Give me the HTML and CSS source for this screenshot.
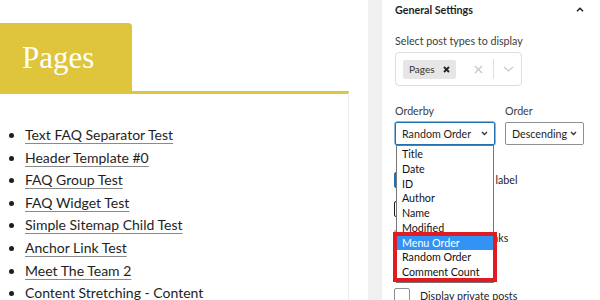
FILE: index.html
```html
<!DOCTYPE html>
<html lang="en">
<head>
    <meta charset="UTF-8">
    <meta name="viewport" content="width=device-width, initial-scale=1.0">
    <title>Pages</title>
    <link rel="stylesheet" href="styles.css">
</head>
<body>
    <div class="page">
        <!-- Page content -->
        <main class="content">
            <div class="title-tab"><h1>Pages</h1></div>
            <div class="content-box">
                <ul class="page-list">
                    <li><a href="#">Text FAQ Separator Test</a></li>
                    <li><a href="#">Header Template #0</a></li>
                    <li><a href="#">FAQ Group Test</a></li>
                    <li><a href="#">FAQ Widget Test</a></li>
                    <li><a href="#">Simple Sitemap Child Test</a></li>
                    <li><a href="#">Anchor Link Test</a></li>
                    <li><a href="#">Meet The Team 2</a></li>
                    <li><a href="#">Content Stretching - Content</a></li>
                </ul>
            </div>
        </main>

        <!-- Block settings sidebar -->
        <aside class="sidebar">
            <div class="sidebar-edge"></div>
            <div class="panel">
                <div class="panel-header">
                    <span>General Settings</span>
                    <svg class="caret-up" width="8" height="5" viewBox="0 0 8 5"><path d="M1 4.2 L4 1.2 L7 4.2" fill="none" stroke="#1e1e1e" stroke-width="1.5"/></svg>
                </div>

                <div class="field-label">Select post types to display</div>
                <div class="multi-select">
                    <span class="tag">Pages
                        <svg width="7" height="7" viewBox="0 0 7 7"><path d="M1 1 L6 6 M6 1 L1 6" stroke="#222" stroke-width="1.8"/></svg>
                    </span>
                    <span class="spacer"></span>
                    <svg class="clear-icon" width="9" height="9" viewBox="0 0 9 9"><path d="M1 1 L8 8 M8 1 L1 8" stroke="#c8c8c8" stroke-width="1.4"/></svg>
                    <span class="divider"></span>
                    <svg class="open-icon" width="11" height="6" viewBox="0 0 11 6"><path d="M1 1 L5.5 5 L10 1" fill="none" stroke="#c8c8c8" stroke-width="1.3"/></svg>
                </div>

                <div class="order-row">
                    <div class="order-field orderby">
                        <div class="field-label">Orderby</div>
                        <div class="select focused">
                            <span>Random Order</span>
                            <svg width="7" height="5" viewBox="0 0 7 5"><path d="M1 1 L3.5 3.5 L6 1" fill="none" stroke="#333" stroke-width="1.3"/></svg>
                        </div>
                        <ul class="dropdown">
                            <li>Title</li>
                            <li>Date</li>
                            <li>ID</li>
                            <li>Author</li>
                            <li>Name</li>
                            <li>Modified</li>
                            <li class="active">Menu Order</li>
                            <li>Random Order</li>
                            <li>Comment Count</li>
                            <span class="highlight-box"></span>
                        </ul>
                    </div>
                    <div class="order-field order">
                        <div class="field-label">Order</div>
                        <div class="select">
                            <span class="select-text">Descending</span>
                            <svg width="7" height="5" viewBox="0 0 7 5"><path d="M1 1 L3.5 3.5 L6 1" fill="none" stroke="#333" stroke-width="1.3"/></svg>
                        </div>
                    </div>
                </div>

                <div class="check-list">
                    <label class="check-row"><span class="checkbox checked"></span>Show post type label</label>
                    <label class="check-row"><span class="checkbox dark"></span>Show date</label>
                    <label class="check-row"><span class="checkbox"></span>Show titles as links</label>
                    <label class="check-row"><span class="checkbox"></span>Show excerpt</label>
                    <label class="check-row"><span class="checkbox"></span>Display private posts</label>
                </div>
            </div>
        </aside>
    </div>
</body>
</html>
```

FILE: styles.css
```css
/* Base */
body {
    margin: 0;
    height: 300px;
    overflow: hidden;
    background: #fff;
    font-family: Lato, "Open Sans", sans-serif;
    color: #1e1e1e;
}

.page {
    display: flex;
    height: 100%;
}

/* Page content */
.content {
    width: 349px;
    flex-shrink: 0;
    display: flex;
    flex-direction: column;
    padding-top: 23px;
    box-sizing: border-box;
}

.title-tab {
    flex-shrink: 0;
    width: 132px;
    height: 68px;
    box-sizing: border-box;
    padding: 19px 0 0 22px;
    background: #dec53b;
    border-top-right-radius: 4px;
}

.title-tab h1 {
    margin: 0;
    font-family: "Liberation Serif", serif;
    font-weight: normal;
    font-size: 31px;
    line-height: 31px;
    color: #fff;
}

.content-box {
    flex: 1;
    border-top: 3px solid #dec53b;
    border-right: 1px solid #ebebeb;
}

.page-list {
    margin: 30px 0 0;
    padding-left: 25px;
    font-size: 14px;
    line-height: 22.6px;
}

.page-list a {
    color: #1e1e1e;
    text-decoration: underline;
    text-decoration-color: #8a8a8a;
    text-underline-offset: 3px;
}

/* Sidebar */
.sidebar {
    flex: 1;
    display: flex;
    margin-left: 19px;
}

.sidebar-edge {
    width: 14px;
    background: #f0f0f0;
}

.panel {
    flex: 1;
    padding: 0 13px;
    font-size: 10.7px;
}

.panel-header {
    display: flex;
    justify-content: space-between;
    align-items: center;
    height: 18px;
    padding-right: 3px;
    font-weight: bold;
}

.field-label {
    line-height: 16px;
    color: #3c3c3c;
}

.panel-header + .field-label {
    margin-top: 15px;
}

.multi-select {
    display: flex;
    align-items: center;
    width: 127px;
    height: 34px;
    margin-top: 3px;
    padding: 0 7px;
    box-sizing: border-box;
    border: 1px solid #dedede;
    border-radius: 4px;
}

.tag {
    display: flex;
    align-items: center;
    gap: 8px;
    height: 19px;
    padding: 0 6px;
    background: #e6e6e6;
    border-radius: 2px;
    font-size: 10px;
    color: #333;
}

.spacer {
    flex: 1;
}

.divider {
    width: 1px;
    height: 20px;
    margin: 0 9px 0 10px;
    background: #dedede;
}

/* Order selects */
.order-row {
    display: flex;
    gap: 10px;
    margin-top: 17px;
}

.order-field {
    position: relative;
}

.orderby {
    width: 100px;
}

.order {
    width: 79px;
}

.select {
    display: flex;
    justify-content: space-between;
    align-items: center;
    height: 23px;
    margin-top: 3px;
    padding: 0 6px;
    box-sizing: border-box;
    border: 1px solid #8c8f94;
    border-radius: 2px;
    white-space: nowrap;
    color: #1e1e1e;
}

.select.focused {
    border-color: #2271b1;
    box-shadow: 0 0 0 0.5px #2271b1;
}

.select-text {
    width: 56px;
    overflow: hidden;
}

.dropdown {
    position: absolute;
    top: 100%;
    left: 1px;
    width: 98px;
    margin: 0;
    padding: 1px 0 2px;
    box-sizing: border-box;
    list-style: none;
    background: #fff;
    border: 1px solid #767676;
    z-index: 2;
}

.dropdown li {
    height: 14.75px;
    line-height: 14.75px;
    padding-left: 5px;
    white-space: nowrap;
    color: #111;
}

.dropdown li.active {
    background: #3393f5;
    color: #fff;
}

.highlight-box {
    position: absolute;
    left: -4px;
    top: 86px;
    width: 104px;
    height: 50px;
    box-sizing: border-box;
    border: 4px solid #e11b22;
}

/* Checkbox rows */
.check-list {
    margin-top: 20px;
    margin-left: -1px;
}

.check-row {
    display: flex;
    align-items: center;
    gap: 10px;
    height: 29px;
    white-space: nowrap;
}

.checkbox {
    width: 16px;
    height: 16px;
    box-sizing: border-box;
    border: 1px solid #8c8f94;
    border-radius: 2px;
    background: #fff;
}

.checkbox.checked {
    background: #2271b1;
    border-color: #2271b1;
}

.checkbox.dark {
    border-color: #1e1e1e;
}
```
